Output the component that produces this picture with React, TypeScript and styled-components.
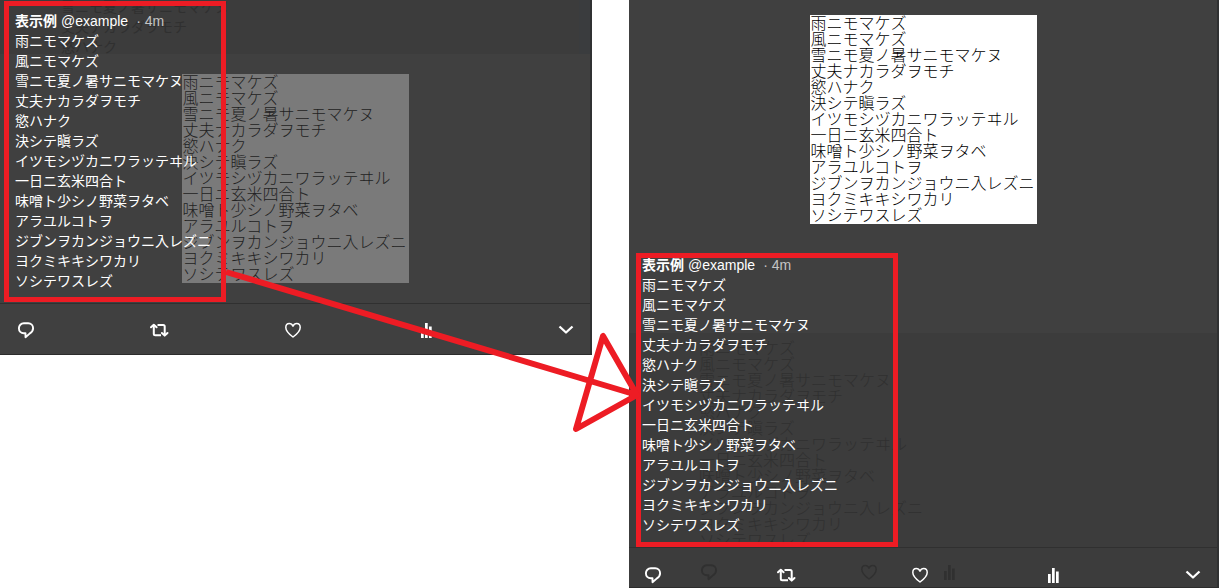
import React from "react";
import styled, { createGlobalStyle, css } from "styled-components";

const GlobalStyle = createGlobalStyle`
  *, *::before, *::after { box-sizing: border-box; }
  body {
    margin: 0;
    background: #fff;
    font-family: "Liberation Sans", "Noto Sans CJK JP", sans-serif;
    overflow-x: hidden;
  }
`;

const poem = [
  "雨ニモマケズ",
  "風ニモマケズ",
  "雪ニモ夏ノ暑サニモマケヌ",
  "丈夫ナカラダヲモチ",
  "慾ハナク",
  "決シテ瞋ラズ",
  "イツモシヅカニワラッテヰル",
  "一日ニ玄米四合ト",
  "味噌ト少シノ野菜ヲタベ",
  "アラユルコトヲ",
  "ジブンヲカンジョウニ入レズニ",
  "ヨクミキキシワカリ",
  "ソシテワスレズ",
];

const Page = styled.main`
  position: relative;
  display: grid;
  grid-template-columns: 592fr 590fr;
  column-gap: 37px;
  align-items: start;
  padding-right: 1px;
`;

const Panel = styled.article`
  position: relative;
  overflow: hidden;
  background: #404040;
  border-right: 2px solid #303132;
  border-bottom: 1px solid #2c2c2c;
`;

const Backdrop = styled.div<{ $edge: "top" | "bottom" }>`
  position: absolute;
  left: 0;
  right: 0;
  background: #3c3c3c;
  color: #303030;
  overflow: hidden;
  ${(p) =>
    p.$edge === "top"
      ? css`
          top: 0;
          height: 54px;
          padding-left: 61px;
          border-right: 11px solid #3a3c3e;
        `
      : css`
          top: 333px;
          bottom: 0;
          padding: 6px 0 0 70px;
        `}
`;

const Verse = styled.div<{ $size: number; $line: number; $light?: boolean }>`
  font-family: "Noto Sans CJK JP", sans-serif;
  font-size: ${(p) => p.$size}px;
  line-height: ${(p) => p.$line}px;
  font-weight: ${(p) => (p.$light ? 300 : 400)};
  white-space: nowrap;
`;

const FadedVerse = styled(Verse)`
  height: 203px;
  overflow: hidden;
`;

const FadedRaised = styled(Verse)`
  margin-top: -4px;
`;

const FadedIcons = styled.div`
  display: flex;
  align-items: center;
  height: 20px;
  margin-top: 20px;
  & > :nth-child(2) { margin-left: 140px; }
  & > :nth-child(3) { margin-left: 60px; }
`;

const Stage = styled.div`
  position: relative;
  display: grid;
  grid-template-columns: 1fr;
  align-items: start;
  & > * { grid-area: 1 / 1; }
`;

const Stack = styled.div`
  position: relative;
  display: flex;
  flex-direction: column;
  align-items: flex-start;
`;

const Picture = styled.figure<{ $dim?: boolean }>`
  align-self: start;
  justify-self: center;
  width: 227px;
  height: 209px;
  margin: ${(p) => (p.$dim ? "74px 0 0" : "15px 0 29px")};
  padding-left: 1px;
  background: ${(p) => (p.$dim ? "#7a7a7a" : "#fff")};
  color: ${(p) => (p.$dim ? "#222" : "#000")};
  & > * { margin-top: -1px; }
`;

const CenteredPicture = styled(Picture)`
  align-self: center;
  display: flow-root;
`;

const DimPicture = styled(Picture)`
  display: flow-root;
`;

const Caption = styled.section<{ $place: "over" | "below" }>`
  position: relative;
  color: #fff;
  outline: 5px solid #ed1c24;
  outline-offset: -5px;
  ${(p) =>
    p.$place === "over"
      ? css`
          width: 222px;
          margin: 1px 0 1px 4px;
          padding: 10px 0 12px 11px;
        `
      : css`
          width: 262px;
          margin-left: 7px;
          padding: 2px 0 13px 6px;
        `}
`;

const Byline = styled.header`
  display: flex;
  height: 19px;
  font-size: 14px;
  line-height: 20px;
  white-space: pre;
`;

const Name = styled.strong`
  margin-right: 4px;
`;

const Time = styled.span`
  margin-left: 8px;
  color: #c4c4c4;
`;

const Actions = styled.footer<{ $tall?: boolean }>`
  position: relative;
  display: grid;
  grid-template-columns: repeat(4, 1fr) 27px;
  align-items: center;
  height: ${(p) => (p.$tall ? 51 : 40)}px;
  padding: ${(p) => (p.$tall ? "2px 14px 0 16px" : "14px 14px 0 14px")};
  border-top: 1px solid #303030;
  & > :last-child { justify-self: end; }
`;

const IconButton = styled.button`
  display: flex;
  width: 20px;
  height: 20px;
  padding: 0;
  border: 0;
  background: none;
  color: #fff;
  cursor: pointer;
`;

const Glyph = styled.svg`
  display: block;
  width: 20px;
  height: 20px;
  flex: none;
`;

const Arrow = styled.svg`
  position: absolute;
  top: 0;
  left: 0;
  width: 100%;
  height: 588px;
  pointer-events: none;
`;

const stroke = { fill: "none", stroke: "currentColor", strokeLinecap: "round", strokeLinejoin: "round" } as const;

const ReplyIcon = () => (
  <Glyph viewBox="0 0 20 20" aria-hidden="true">
    <path {...stroke} strokeWidth="1.9" d="M7.800 3.300h4.400c2.800 0 4.900 2.100 4.900 4.900 0 2.300-1.300 3.900-3.200 5.200L9.500 17.200v-3.900H7.800C5 13.300 2.900 11.100 2.900 8.300S5 3.300 7.800 3.300z" />
  </Glyph>
);

const RetweetIcon = () => (
  <Glyph viewBox="0 0 20 20" aria-hidden="true">
    <path {...stroke} strokeWidth="2" strokeLinecap="butt" d="M4.800 6v7.700c0 1 .5 1.500 1.500 1.500H12M8.500 5h5.700c1 0 1.500.5 1.500 1.500V14" />
    <path {...stroke} strokeWidth="2" d="M2 7.300 4.800 4.700l2.800 2.600M12.900 13l2.800 2.600 2.800-2.600" />
  </Glyph>
);

const HeartIcon = () => (
  <Glyph viewBox="0 0 20 20" aria-hidden="true">
    <path {...stroke} strokeWidth="1.500" d="M10 17C6 14 2.800 10.800 2.800 7.400 2.800 5 4.400 3.400 6.300 3.400c1.700 0 3 1 3.700 2.700.7-1.700 2-2.700 3.700-2.700 1.900 0 3.500 1.600 3.500 4C17.200 10.800 14 14 10 17z" />
  </Glyph>
);

const StatsIcon = () => (
  <Glyph viewBox="0 0 20 20" aria-hidden="true">
    <path fill="currentColor" d="M5 9h2.700v9H5zM9 3h2.700v15H9zM13 6.500h2.700V18H13z" />
  </Glyph>
);

const ChevronIcon = () => (
  <Glyph viewBox="0 0 20 20" aria-hidden="true">
    <path {...stroke} strokeWidth="2.300" strokeLinecap="butt" d="m3.500 6.500 6.500 6 6.500-6" />
  </Glyph>
);

const actions = [
  ["Reply", ReplyIcon],
  ["Retweet", RetweetIcon],
  ["Like", HeartIcon],
  ["Activity", StatsIcon],
  ["More", ChevronIcon],
] as const;

const Lines = ({ items = poem }: { items?: string[] }) => (
  <>
    {items.map((line) => (
      <div key={line}>{line}</div>
    ))}
  </>
);

const Tweet = ({ place }: { place: "over" | "below" }) => (
  <Caption $place={place}>
    <Byline>
      <Name>表示例</Name>
      <span>@example</span>
      <Time>· 4m</Time>
    </Byline>
    <Verse $size={14} $line={20}>
      <Lines />
    </Verse>
  </Caption>
);

const ActionBar = ({ tall }: { tall?: boolean }) => (
  <Actions $tall={tall}>
    {actions.map(([label, Icon]) => (
      <IconButton key={label} type="button" aria-label={label}>
        <Icon />
      </IconButton>
    ))}
  </Actions>
);

export default function App() {
  return (
    <>
      <GlobalStyle />
      <Page>
        <Panel>
          <Backdrop $edge="top">
            <FadedRaised $size={14} $line={20}>
              <Lines items={poem.slice(2, 5)} />
            </FadedRaised>
          </Backdrop>
          <Stage>
            <DimPicture $dim>
              <Verse $size={16} $line={16} $light>
                <Lines />
              </Verse>
            </DimPicture>
            <Tweet place="over" />
          </Stage>
          <ActionBar tall />
        </Panel>
        <Panel>
          <Backdrop $edge="bottom">
            <FadedVerse $size={16} $line={16} $light>
              <Lines />
            </FadedVerse>
            <FadedIcons>
              <ReplyIcon />
              <HeartIcon />
              <StatsIcon />
            </FadedIcons>
          </Backdrop>
          <Stack>
            <CenteredPicture>
              <Verse $size={16} $line={16} $light>
                <Lines />
              </Verse>
            </CenteredPicture>
            <Tweet place="below" />
          </Stack>
          <ActionBar />
        </Panel>
        <Arrow viewBox="0 0 1220 588" preserveAspectRatio="none" aria-hidden="true">
          <path
            d="M226 272 637 395M637 395 603 336 576 429z"
            fill="none"
            stroke="#ed1c24"
            strokeWidth="6"
            strokeLinejoin="round"
            vectorEffect="non-scaling-stroke"
          />
        </Arrow>
      </Page>
    </>
  );
}
